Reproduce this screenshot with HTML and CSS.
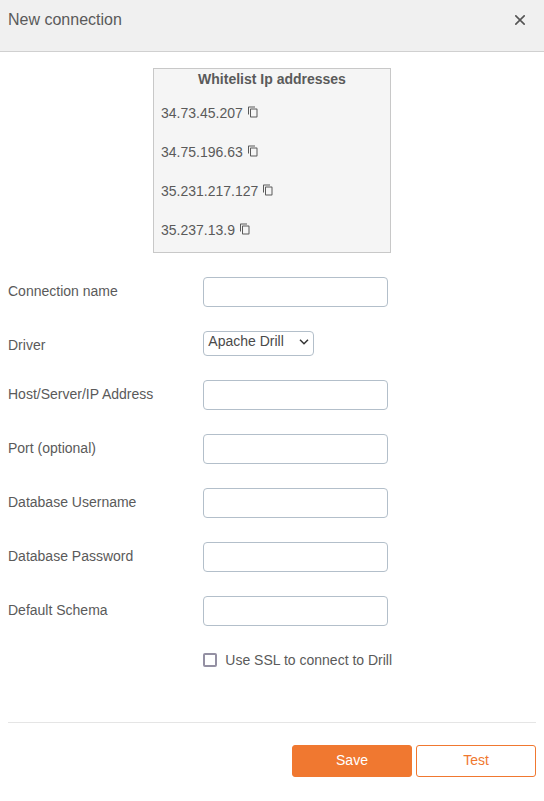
FILE: index.html
```html
<!DOCTYPE html>
<html lang="en">
<head>
<meta charset="utf-8">
<title>New connection</title>
<link rel="stylesheet" href="styles.css">
</head>
<body>
<svg class="defs" aria-hidden="true">
  <symbol id="copy" viewBox="0 0 24 24"><path fill="currentColor" d="M16 1H4c-1.1 0-2 .9-2 2v14h2V3h12V1zm3 4H8c-1.1 0-2 .9-2 2v14c0 1.1.9 2 2 2h11c1.1 0 2-.9 2-2V7c0-1.1-.9-2-2-2zm0 16H8V7h11v14z"/></symbol>
</svg>
<header class="header">
  <h1 class="title">New connection</h1>
  <button class="close" aria-label="Close"><svg width="10" height="10" viewBox="0 0 10 10"><path d="M.3.3l9.4 9.4M9.7.3L.3 9.7" stroke="currentColor" stroke-width="1.6"/></svg></button>
</header>
<main class="content">
  <section class="whitelist">
    <h2 class="whitelist-title">Whitelist Ip addresses</h2>
    <div class="ip">34.73.45.207 <svg class="copy"><use href="#copy"/></svg></div>
    <div class="ip">34.75.196.63 <svg class="copy"><use href="#copy"/></svg></div>
    <div class="ip">35.231.217.127 <svg class="copy"><use href="#copy"/></svg></div>
    <div class="ip">35.237.13.9 <svg class="copy"><use href="#copy"/></svg></div>
  </section>
  <form class="form">
    <label class="label" for="name">Connection name</label><input class="input" id="name">
    <label class="label label-driver" for="driver">Driver</label>
    <div class="select-wrap">
      <select class="select" id="driver"><option>Apache Drill</option></select>
      <svg class="chevron" width="10" height="6" viewBox="0 0 10 6"><path d="M1 .8l4 4 4-4" fill="none" stroke="currentColor" stroke-width="1.5"/></svg>
    </div>
    <label class="label" for="host">Host/Server/IP Address</label><input class="input" id="host">
    <label class="label" for="port">Port (optional)</label><input class="input" id="port">
    <label class="label" for="user">Database Username</label><input class="input" id="user">
    <label class="label" for="pass">Database Password</label><input class="input" id="pass" type="password">
    <label class="label" for="schema">Default Schema</label><input class="input" id="schema">
    <label class="check"><input class="checkbox" type="checkbox">Use SSL to connect to Drill</label>
  </form>
  <footer class="footer">
    <button class="button primary">Save</button>
    <button class="button">Test</button>
  </footer>
</main>
</body>
</html>
```

FILE: styles.css
```css
* { box-sizing: border-box; }
body {
  margin: 0;
  background: #fff;
  color: #5a5a5a;
  font: 14px/20px "Liberation Sans", Arial, sans-serif;
}
.defs { display: none; }
.header {
  display: flex;
  justify-content: space-between;
  align-items: flex-start;
  height: 52px;
  padding: 10px 19px 0 8px;
  background: #f0f0f0;
  border-bottom: 1px solid #d0d0d0;
}
.title { margin: 0; font-size: 16px; font-weight: 400; line-height: 20px; }
.close { margin: 5px 0 0; padding: 0; border: 0; background: none; color: #545454; line-height: 0; }
.close svg { display: block; }
.content { padding: 16px 8px 0; }
.whitelist {
  width: 238px;
  height: 185px;
  margin: 0 auto;
  padding: 0 7px;
  background: #f5f5f5;
  border: 1px solid #c8c8c8;
}
.whitelist-title { margin: 0 0 5px; font-size: 14px; line-height: 20px; text-align: center; }
.ip { height: 39px; line-height: 39px; }
.copy { width: 12px; height: 12px; vertical-align: 0; }
.form {
  display: grid;
  grid-template-columns: 195px 185px;
  row-gap: 24px;
  margin-top: 24px;
}
.label { line-height: 28px; }
.label-driver { height: 25px; }
.input {
  width: 185px;
  height: 30px;
  border: 1px solid #b3bfca;
  border-radius: 4px;
  background: #fff;
  outline: 0;
}
.select-wrap { position: relative; width: 111px; height: 25px; }
.select {
  display: block;
  appearance: none;
  width: 111px;
  height: 25px;
  padding: 0 0 5px 4.3px;
  border: 1px solid #b3bfca;
  border-radius: 4px;
  background: #fff;
  color: #4a4a4a;
  font: inherit;
  line-height: 18px;
}
.chevron { position: absolute; right: 5px; top: 8px; color: #333; pointer-events: none; }
.check {
  grid-column: 2;
  display: flex;
  align-items: center;
  gap: 8.3px;
  height: 20px;
  white-space: nowrap;
}
.checkbox {
  appearance: none;
  width: 14px;
  height: 14px;
  margin: 0;
  border: 2px solid #9490a3;
  border-radius: 2px;
  background: #fff;
  flex: none;
}
.footer {
  display: flex;
  justify-content: flex-end;
  gap: 4px;
  margin-top: 52px;
  padding-top: 22px;
  border-top: 1px solid #e5e5e5;
}
.button {
  width: 120px;
  height: 32px;
  padding: 0 0 2px;
  border: 1px solid #f07830;
  border-radius: 3px;
  background: #fff;
  color: #f07830;
  font: inherit;
}
.primary { background: #f07830; color: #fff; }
```
